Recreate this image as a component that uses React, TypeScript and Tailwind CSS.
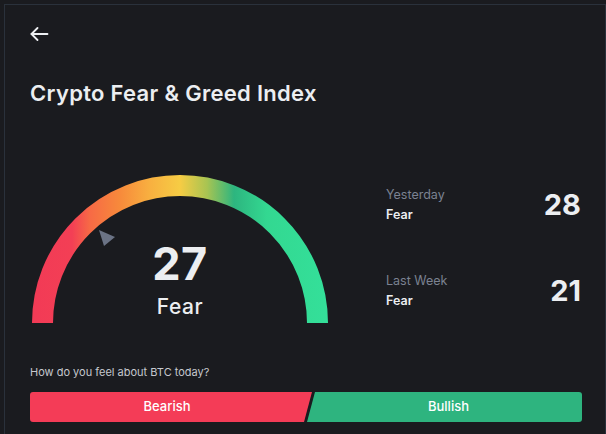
import React from "react";

const font = { fontFamily: "Inter, Lato, sans-serif" };

function BackArrow() {
  return (
    <svg width="19" height="14" viewBox="0 0 19 14" fill="none" stroke="#eef0f3" strokeWidth="1.8" strokeLinecap="round" strokeLinejoin="round">
      <path d="M1.5 7H17.5" />
      <path d="M7.5 1L1.5 7L7.5 13" />
    </svg>
  );
}

function Gauge() {
  return (
    <div className="relative w-[300px] h-[151px]">
      <svg width="300" height="151" viewBox="0 0 300 151">
        <defs>
          <linearGradient id="fg" x1="0" y1="0" x2="300" y2="0" gradientUnits="userSpaceOnUse">
            <stop offset="0" stopColor="#f23a56" />
            <stop offset="0.14" stopColor="#f33f55" />
            <stop offset="0.2" stopColor="#f76a45" />
            <stop offset="0.3" stopColor="#f78a3b" />
            <stop offset="0.4" stopColor="#f8b040" />
            <stop offset="0.5" stopColor="#f6cc44" />
            <stop offset="0.59" stopColor="#a8c452" />
            <stop offset="0.68" stopColor="#2db57f" />
            <stop offset="0.79" stopColor="#33d891" />
            <stop offset="1" stopColor="#34e09a" />
          </linearGradient>
        </defs>
        <path d="M12.5 150 A137.5 137.5 0 0 1 287.5 150" stroke="url(#fg)" strokeWidth="21" fill="none" />
        <polygon points="69,57 85,64 74,73" fill="#6b7385" />
      </svg>
      <div className="absolute left-0 right-0 top-[68px] flex flex-col items-center text-[#eceef1]">
        <div className="text-[45px] leading-[46px] font-bold tracking-[0.5px]">27</div>
        <div className="text-[21px] leading-[24px] mt-[8px] font-medium tracking-[0.6px]">Fear</div>
      </div>
    </div>
  );
}

function HistoryRow({ label, mood, value }: { label: string; mood: string; value: string }) {
  return (
    <div className="flex items-center justify-between">
      <div className="flex flex-col">
        <span className="text-[12.5px] leading-[16px] text-[#7b8291]">{label}</span>
        <span className="text-[12.5px] leading-[16px] mt-[4px] font-semibold text-[#eceef1]">{mood}</span>
      </div>
      <span className="text-[29px] leading-[30px] font-bold text-[#eceef1] pr-[1px]">{value}</span>
    </div>
  );
}

export default function App() {
  return (
    <div className="w-[606px] h-[434px] bg-[#1a1b1f] pl-[4px] pt-[4px] overflow-hidden" style={font}>
      <div className="h-full border-l border-t border-r border-[#2a313b] bg-[#1a1b1f] pl-[25px] pr-[23px] flex flex-col">
        <div className="mt-[22px] h-[14px] flex items-center">
          <BackArrow />
        </div>
        <h1 className="mt-[38px] text-[22px] leading-[28px] font-semibold tracking-[0.3px] text-[#eceef1]">Crypto Fear &amp; Greed Index</h1>

        <div className="mt-[66px] flex items-start">
          <Gauge />
          <div className="ml-[56px] mt-[14px] flex-1 flex flex-col gap-[50px]">
            <HistoryRow label="Yesterday" mood="Fear" value="28" />
            <HistoryRow label="Last Week" mood="Fear" value="21" />
          </div>
        </div>

        <p className="mt-[41px] text-[11px] leading-[14px] text-[#c5c8ce]">How do you feel about BTC today?</p>

        <div className="mt-[13px] flex h-[30px]">
          <button className="w-[282px] h-full bg-[#f43c57] text-white text-[13px] font-medium rounded-l-[3px] [clip-path:polygon(0_0,100%_0,calc(100%-8px)_100%,0_100%)] pr-[8px]">
            Bearish
          </button>
          <button className="flex-1 -ml-[5px] h-full bg-[#2eb47f] text-white text-[13px] font-medium rounded-r-[3px] [clip-path:polygon(8px_0,100%_0,100%_100%,0_100%)] pl-[8px]">
            Bullish
          </button>
        </div>
      </div>
    </div>
  );
}
